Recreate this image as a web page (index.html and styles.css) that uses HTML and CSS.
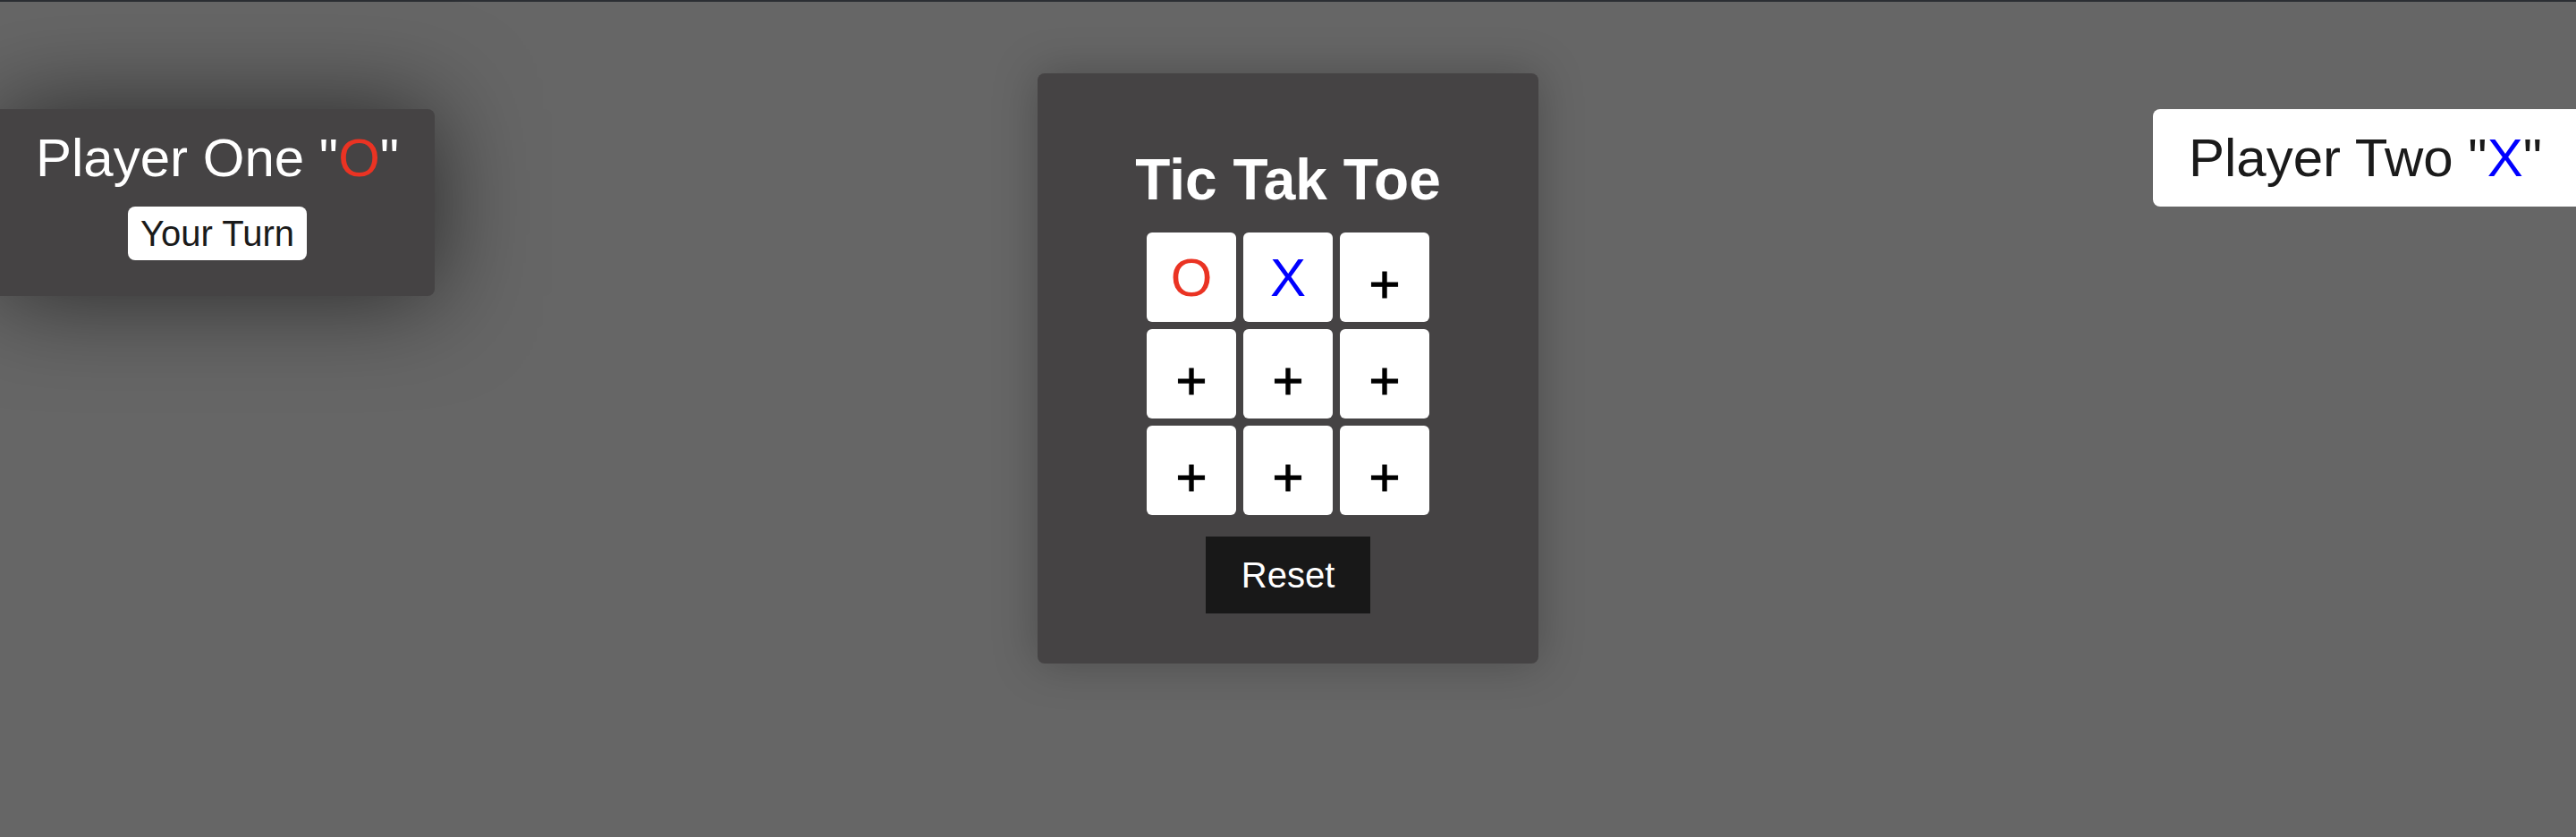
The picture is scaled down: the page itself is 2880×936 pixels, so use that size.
FILE: index.html
```html
<!DOCTYPE html>
<html lang="en">
<head>
<meta charset="utf-8">
<title>Tic Tak Toe</title>
<link rel="stylesheet" href="styles.css">
</head>
<body>
<div class="topbar"></div>
<main class="stage">
  <section class="player player-active">
    <h2 class="player-name">Player One "<span class="mark-o">O</span>"</h2>
    <div class="turn">Your Turn</div>
  </section>
  <section class="board">
    <h1 class="title">Tic Tak Toe</h1>
    <div class="grid">
      <div class="cell cell-o">O</div>
      <div class="cell cell-x">X</div>
      <div class="cell cell-empty">+</div>
      <div class="cell cell-empty">+</div>
      <div class="cell cell-empty">+</div>
      <div class="cell cell-empty">+</div>
      <div class="cell cell-empty">+</div>
      <div class="cell cell-empty">+</div>
      <div class="cell cell-empty">+</div>
    </div>
    <button class="reset">Reset</button>
  </section>
  <section class="player player-idle">
    <h2 class="player-name">Player Two "<span class="mark-x">X</span>"</h2>
  </section>
</main>
</body>
</html>
```
FILE: styles.css
```css
html, body {
  margin: 0;
  padding: 0;
}
body {
  background: #666666;
  font-family: "Liberation Sans", Arial, sans-serif;
  height: 936px;
  overflow: hidden;
}
.topbar {
  height: 2px;
  background: #2b2e33;
}
.stage {
  display: grid;
  grid-template-columns: 1fr auto 1fr;
  align-items: start;
  padding-top: 80px;
}
.player {
  margin-top: 40px;
  padding: 20px 40px;
  display: flex;
  flex-direction: column;
  align-items: center;
}
.player-active {
  justify-self: start;
  background: #454344;
  color: #ffffff;
  padding-bottom: 40px;
  border-radius: 0 8px 8px 0;
  box-shadow: 0 0 110px rgba(0, 0, 0, 0.6);
}
.player-idle {
  justify-self: end;
  background: #ffffff;
  color: #1a1a1a;
  padding-right: 38px;
  border-radius: 8px 0 0 8px;
}
.player-name {
  margin: 0;
  font-size: 60px;
  font-weight: normal;
  line-height: 69px;
  white-space: nowrap;
}
.turn {
  margin-top: 20px;
  background: #ffffff;
  color: #1a1a1a;
  font-size: 40px;
  line-height: 46px;
  padding: 7px 14px;
  border-radius: 8px;
}
.mark-o { color: #ea3323; }
.mark-x { color: #0000ff; }
.board {
  width: 560px;
  box-sizing: border-box;
  background: #454344;
  border-radius: 8px;
  padding: 82px 0 56px;
  display: flex;
  flex-direction: column;
  align-items: center;
  box-shadow: 0 0 50px rgba(0, 0, 0, 0.25);
}
.title {
  margin: 0;
  font-size: 64px;
  font-weight: bold;
  line-height: 74px;
  color: #ffffff;
}
.grid {
  margin-top: 22px;
  display: grid;
  grid-template-columns: repeat(3, 100px);
  grid-auto-rows: 100px;
  gap: 8px;
}
.cell {
  background: #ffffff;
  border-radius: 6px;
  display: flex;
  align-items: center;
  justify-content: center;
  font-size: 60px;
  line-height: 69px;
  color: #000000;
}
.cell-o { color: #ea3323; }
.cell-x { color: #0000ff; }
.cell-empty {
  padding-top: 14px;
  box-sizing: border-box;
  -webkit-text-stroke: 1px #000000;
}
.reset {
  margin-top: 24px;
  background: #181818;
  color: #ffffff;
  border: none;
  border-radius: 0;
  font-family: "Liberation Sans", Arial, sans-serif;
  font-size: 40px;
  line-height: 46px;
  padding: 20px 40px;
}
```
